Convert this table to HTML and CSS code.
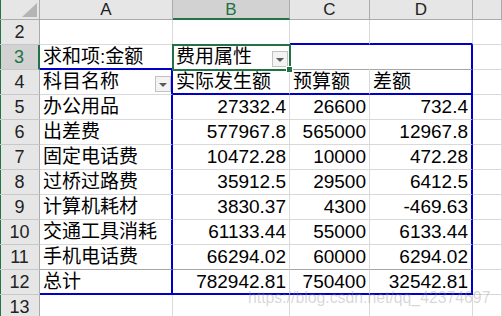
FILE: index.html
```html
<!DOCTYPE html>
<html>
<head>
<meta charset="utf-8">
<link rel="stylesheet" href="styles.css">
</head>
<body>
<div class="sheet">
  <div class="corner"><svg width="39" height="19" viewBox="0 0 39 19"><polygon points="37,3 37,17 22,17" fill="#b4b4b4"/></svg></div>
  <div class="ch">A</div><div class="ch sel">B</div><div class="ch">C</div><div class="ch">D</div><div class="ch"></div>

  <div class="rh">2</div><div class="c"></div><div class="c"></div><div class="c bb-blue"></div><div class="c bb-blue"></div><div class="c"></div>

  <div class="rh sel">3</div>
  <div class="c bb-blue">求和项:金额</div>
  <div class="c has-dd active"><span>费用属性</span><span class="dd"></span></div>
  <div class="c bb-dark no-r"></div>
  <div class="c bb-dark br-blue"></div>
  <div class="c"></div>

  <div class="rh">4</div>
  <div class="c has-dd br-blue"><span>科目名称</span><span class="dd"></span></div>
  <div class="c bb-blue">实际发生额</div>
  <div class="c bb-blue">预算额</div>
  <div class="c bb-blue br-blue">差额</div>
  <div class="c"></div>

  <div class="rh">5</div><div class="c br-blue">办公用品</div><div class="c n">27332.4</div><div class="c n">26600</div><div class="c n br-blue">732.4</div><div class="c"></div>
  <div class="rh">6</div><div class="c br-blue">出差费</div><div class="c n">577967.8</div><div class="c n">565000</div><div class="c n br-blue">12967.8</div><div class="c"></div>
  <div class="rh">7</div><div class="c br-blue">固定电话费</div><div class="c n">10472.28</div><div class="c n">10000</div><div class="c n br-blue">472.28</div><div class="c"></div>
  <div class="rh">8</div><div class="c br-blue">过桥过路费</div><div class="c n">35912.5</div><div class="c n">29500</div><div class="c n br-blue">6412.5</div><div class="c"></div>
  <div class="rh">9</div><div class="c br-blue">计算机耗材</div><div class="c n">3830.37</div><div class="c n">4300</div><div class="c n br-blue">-469.63</div><div class="c"></div>
  <div class="rh">10</div><div class="c br-blue">交通工具消耗</div><div class="c n">61133.44</div><div class="c n">55000</div><div class="c n br-blue">6133.44</div><div class="c"></div>
  <div class="rh">11</div><div class="c br-blue bb-dark">手机电话费</div><div class="c n bb-dark">66294.02</div><div class="c n bb-dark">60000</div><div class="c n br-blue bb-dark">6294.02</div><div class="c"></div>
  <div class="rh">12</div><div class="c br-blue bb-blue">总计</div><div class="c n bb-blue">782942.81</div><div class="c n bb-blue">750400</div><div class="c n br-blue bb-blue">32542.81</div><div class="c"></div>
  <div class="rh">13</div><div class="c"></div><div class="c"></div><div class="c"></div><div class="c"></div><div class="c"></div>
</div>
<div class="wm">https://blog.csdn.net/qq_42374697</div>
</body>
</html>
```

FILE: styles.css
```css
html, body {
  margin: 0;
  padding: 0;
  background: #fff;
}
body {
  width: 502px;
  height: 316px;
  overflow: hidden;
  position: relative;
  font-family: "Liberation Sans", "Noto Sans CJK SC", sans-serif;
  color: #000;
}
.sheet {
  display: grid;
  grid-template-columns: 40px 133px 117px 80px 103px 29px;
  grid-template-rows: 20px;
  grid-auto-rows: 25px;
}
.sheet > div {
  box-sizing: border-box;
}
.corner {
  background: #e6e6e6;
  border-right: 1px solid #ababab;
  border-bottom: 1px solid #ababab;
  box-shadow: inset 1px 0 #217346;
}
.corner svg {
  display: block;
}
.ch {
  background: #e6e6e6;
  border-right: 1px solid #ababab;
  border-bottom: 1px solid #ababab;
  font-size: 17px;
  line-height: 1;
  color: #222;
  display: flex;
  align-items: center;
  justify-content: center;
}
.ch.sel {
  background: #d2d2d2;
  color: #217346;
  border-bottom: 2px solid #217346;
}
.rh {
  background: #e6e6e6;
  border-right: 1px solid #ababab;
  border-bottom: 1px solid #c8c8c8;
  font-size: 18px;
  line-height: 24px;
  text-align: center;
  color: #222;
  box-shadow: inset 1px 0 #217346;
}
.rh.sel {
  background: #d2d2d2;
  color: #217346;
  border-right: 2px solid #217346;
}
.c {
  border-right: 1px solid #d9d9d9;
  border-bottom: 1px solid #d9d9d9;
  font-size: 19px;
  line-height: 24px;
  padding: 0 3px;
  display: flex;
  align-items: center;
  white-space: nowrap;
}
.n {
  justify-content: flex-end;
}
.has-dd {
  justify-content: space-between;
  padding-right: 1px;
}
.br-blue {
  border-right: 2px solid #0000c8;
}
.has-dd.br-blue {
  padding-right: 0;
}
.bb-blue {
  border-bottom: 2px solid #0000c8;
}
.bb-dark {
  border-bottom: 1px solid #a6a6a6;
}
.no-r {
  border-right-color: #fff;
}
.dd {
  box-sizing: border-box;
  width: 16px;
  height: 16px;
  align-self: flex-end;
  margin-bottom: 2px;
  border: 1px solid #c2c2c2;
  background: #f3f3f3;
  display: flex;
  align-items: center;
  justify-content: center;
}
.dd::before {
  content: "";
  width: 0;
  height: 0;
  border-left: 4px solid transparent;
  border-right: 4px solid transparent;
  border-top: 4px solid #5a5a5a;
  margin-top: 1px;
}
.active {
  position: relative;
  z-index: 2;
  outline: 2px solid #217346;
  outline-offset: -1px;
}
.active::after {
  content: "";
  position: absolute;
  right: -4px;
  bottom: -4px;
  width: 7px;
  height: 7px;
  box-sizing: border-box;
  background: #217346;
  border: 1px solid #fff;
}
.wm {
  position: absolute;
  left: 248px;
  top: 290px;
  font-size: 15.8px;
  line-height: 16px;
  color: rgba(150, 150, 150, 0.38);
  white-space: nowrap;
}
```
